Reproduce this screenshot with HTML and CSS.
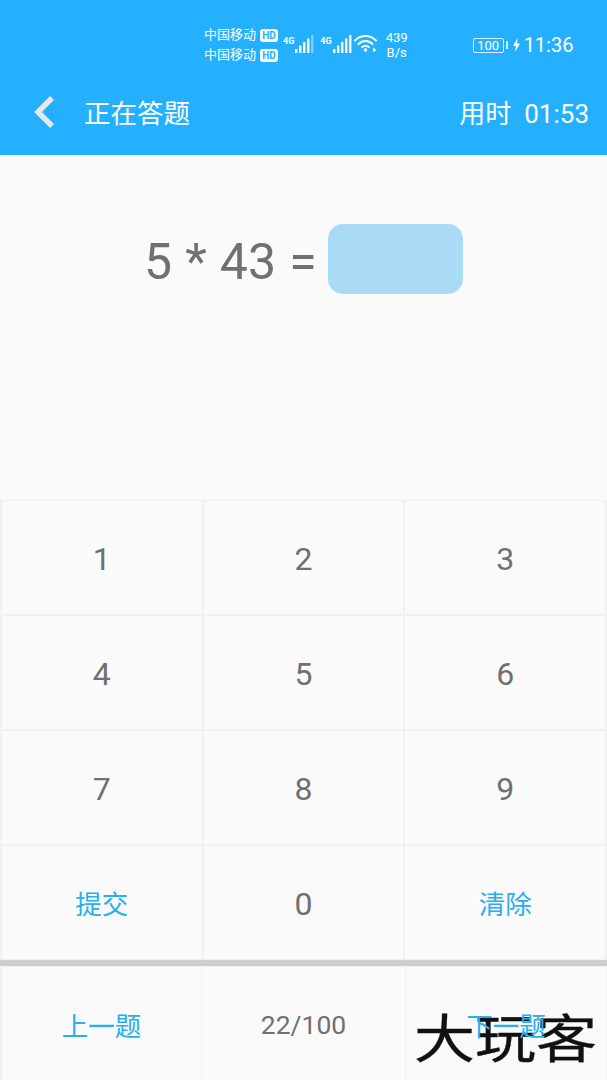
FILE: index.html
```html
<!DOCTYPE html>
<html lang="en">
<head>
  <meta charset="UTF-8" />
  <meta name="viewport" content="width=device-width, initial-scale=1.0" />
  <title>正在答题</title>
  <link rel="stylesheet" href="styles.css">
</head>
<body>
  <header class="app-header">
    <div class="status-bar">
      <div class="carriers">
        <div class="carrier"><span>中国移动</span><b class="hd">HD</b></div>
        <div class="carrier"><span>中国移动</span><b class="hd">HD</b></div>
      </div>
      <div class="signal">
        <span class="net">4G</span>
        <svg width="20" height="18" viewBox="0 0 20 18">
          <g fill="#fff">
            <rect x="0" y="14" width="2.4" height="4"/>
            <rect x="4" y="10.500" width="2.4" height="7.500"/>
            <rect x="8" y="7" width="2.4" height="11"/>
            <rect x="12" y="3.500" width="2.400" height="14.500"/>
            <rect x="16" y="0" width="2.400" height="18" opacity="0.4"/>
          </g>
        </svg>
      </div>
      <div class="signal">
        <span class="net">4G</span>
        <svg width="20" height="18" viewBox="0 0 20 18">
          <g fill="#fff">
            <rect x="0" y="14" width="2.4" height="4"/>
            <rect x="4" y="10.500" width="2.4" height="7.500"/>
            <rect x="8" y="7" width="2.4" height="11"/>
            <rect x="12" y="3.500" width="2.400" height="14.500"/>
            <rect x="16" y="0" width="2.400" height="18"/>
          </g>
        </svg>
      </div>
      <svg class="wifi" width="24" height="18" viewBox="0 0 24 18">
        <g fill="none" stroke="#fff" stroke-width="1.900" stroke-linecap="round">
          <path d="M1 6.500C7 .5 16 .5 22 6.500"/>
          <path d="M4.500 10C8.500 6 14.500 6 18.500 10"/>
          <path d="M8 13.200C10 11.500 13 11.500 15 13.200"/>
        </g>
        <circle cx="11.500" cy="16" r="1.700" fill="#fff"/>
        <path d="M19 13.500l3.500 2.500-3.500 2.500z" fill="#fff"/>
      </svg>
      <div class="speed"><span>439</span><span>B/s</span></div>
      <div class="battery"><span class="battery-body">100</span><i class="battery-tip"></i></div>
      <svg class="bolt" width="7" height="14" viewBox="0 0 7 14"><path d="M4.500 0L0 8h2.800L2 14l5-8.500H4z" fill="#fff"/></svg>
      <div class="clock">11:36</div>
    </div>
    <div class="title-bar">
      <svg class="back" width="24" height="34" viewBox="0 0 24 34">
        <path d="M20 3L6 17l14 14" fill="none" stroke="#e8e8e8" stroke-width="5.500"/>
      </svg>
      <div class="title">正在答题</div>
      <div class="timer">用时&nbsp;&nbsp;01:53</div>
    </div>
  </header>

  <section class="question">
    <span class="formula">5 * 43 =</span>
    <div class="answer"></div>
  </section>

  <section class="keypad">
    <button class="key">1</button>
    <button class="key">2</button>
    <button class="key">3</button>
    <button class="key">4</button>
    <button class="key">5</button>
    <button class="key">6</button>
    <button class="key">7</button>
    <button class="key">8</button>
    <button class="key">9</button>
    <button class="key action">提交</button>
    <button class="key">0</button>
    <button class="key action">清除</button>
  </section>

  <nav class="pager">
    <button class="page-btn action">上一题</button>
    <div class="page-btn count">22/100</div>
    <button class="page-btn action">下一题</button>
  </nav>

  <div class="watermark">大玩客</div>
</body>
</html>
```

FILE: styles.css
```css
* {
  margin: 0;
  padding: 0;
  box-sizing: border-box;
}

:root {
  --primary: #25afff;
  --action: #29aeef;
  --text: #707070;
  --line: #f1f1f1;
  --background: #fafafa;
}

html, body {
  height: 1080px;
  overflow: hidden;
}

body {
  position: relative;
  font-family: Roboto, "Noto Sans CJK SC", sans-serif;
  background-color: var(--background);
  color: var(--text);
}

button {
  font-family: inherit;
  background: none;
  border: none;
}

.app-header {
  height: 155px;
  background-color: var(--primary);
  color: #fff;
}

.status-bar {
  height: 76px;
  display: flex;
  align-items: center;
  padding: 14px 0 0 204px;
}

.carriers {
  width: 79px;
  font-size: 13px;
  line-height: 20px;
  color: #fff;
}

.carrier {
  display: flex;
  align-items: center;
  gap: 4px;
}

.hd {
  width: 18px;
  font-size: 10px;
  line-height: 13px;
  text-align: center;
  border-radius: 3px;
  background-color: #fff;
  color: var(--primary);
}

.signal {
  display: flex;
  align-items: flex-end;
  gap: 1px;
  height: 20px;
  margin-top: -4px;
}

.net {
  font-size: 9px;
  font-weight: 700;
  line-height: 12px;
  align-self: flex-start;
  margin-top: 2px;
}

.signal + .signal {
  margin-left: 5px;
}

.wifi {
  margin: -4px 0 0 1px;
}

.speed {
  width: 24px;
  margin-left: 7px;
  display: flex;
  flex-direction: column;
  align-items: center;
  font-size: 13px;
  line-height: 15px;
}

.battery {
  display: flex;
  align-items: center;
  margin-left: 64px;
}

.battery-body {
  width: 31px;
  height: 15px;
  border: 1px solid #d8f0ff;
  border-radius: 2px;
  font-size: 13px;
  line-height: 13px;
  text-align: center;
}

.battery-tip {
  width: 2px;
  height: 8px;
  margin-left: 2px;
  background-color: #e0f3ff;
}

.bolt {
  margin-left: 5px;
}

.clock {
  margin-left: 4px;
  font-size: 20px;
}

.title-bar {
  height: 79px;
  display: flex;
  align-items: center;
  padding: 0 18px 8px 32px;
}

.back {
  margin-right: 28px;
}

.title {
  font-size: 26.500px;
}

.timer {
  margin-left: auto;
  font-size: 26px;
}

.question {
  height: 345px;
  display: flex;
  align-items: flex-start;
  padding: 69px 0 0 144px;
  gap: 11px;
}

.formula {
  font-size: 50px;
  line-height: 76px;
  word-spacing: 0.700px;
  white-space: nowrap;
}

.answer {
  width: 135px;
  height: 70px;
  border-radius: 15px;
  background-color: #a9dbf6;
}

.keypad {
  display: grid;
  grid-template-columns: repeat(3, 1fr);
  grid-auto-rows: 113px;
  gap: 2px;
  height: 460px;
  padding: 1px 2px;
  background-color: var(--line);
}

.key {
  font-size: 32px;
  padding-top: 2px;
  color: var(--text);
  background-color: var(--background);
}

.key.action {
  padding-top: 0;
}

.key.action,
.page-btn.action {
  font-size: 26.500px;
  color: var(--action);
}

.pager {
  position: relative;
  z-index: 1;
  height: 120px;
  border-top: 6px solid #cdcdcd;
  display: grid;
  grid-template-columns: 202px 204px 201px;
}

.page-btn {
  display: flex;
  align-items: center;
  justify-content: center;
  border-right: 1px solid var(--line);
  border-top: 1px solid var(--line);
  padding-top: 2px;
}

.page-btn:first-child {
  border-left: 2px solid var(--line);
}

.count {
  font-size: 26.500px;
}

.watermark {
  position: absolute;
  left: 414px;
  top: 1001px;
  font-size: 61px;
  line-height: 68px;
  color: #111;
  white-space: nowrap;
  transform: scaleY(0.860);
  transform-origin: left bottom;
  -webkit-text-stroke: 0.400px #111;
}
```
